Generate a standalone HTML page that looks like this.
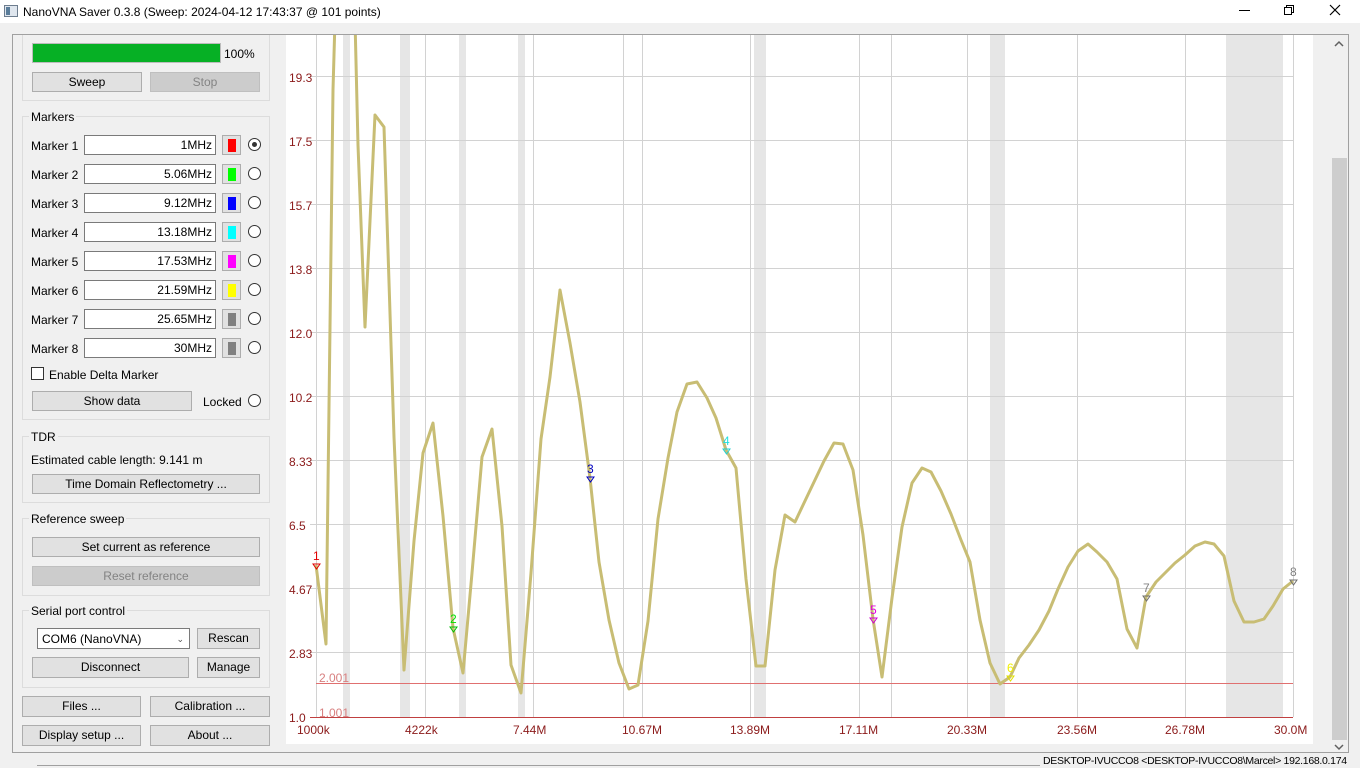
<!DOCTYPE html>
<html><head><meta charset="utf-8"><style>
*{box-sizing:border-box;margin:0;padding:0}
body{width:1360px;height:768px;overflow:hidden;background:#f0f0f0;font-family:"Liberation Sans",sans-serif;font-size:12px;color:#000;position:relative}
.a{position:absolute;white-space:nowrap}
.btn{position:absolute;background:#e1e1e1;border:1px solid #adadad;text-align:center;font-size:12px;line-height:19px}
.dis{background:#cccccc;border-color:#bfbfbf;color:#838383}
.gb{position:absolute;border:1px solid #dcdcdc;left:22px;width:248px}
.gt{position:absolute;background:#f0f0f0;padding:0 2px;left:6px;top:-8px}
.inp{position:absolute;left:84px;width:132px;height:20px;background:#fff;border:1px solid #7a7a7a;text-align:right;padding-right:3px;line-height:19px}
.sw{position:absolute;left:222px;width:19px;height:20px;background:#e1e1e1;border:1px solid #adadad}
.sw i{position:absolute;left:5px;top:3px;width:8px;height:13px}
.rd{position:absolute;left:248px;width:13px;height:13px;border:1px solid #333;border-radius:50%;background:#fff}
.lbl{position:absolute;left:31px}
</style></head><body>
<div class="a" style="left:0;top:0;width:1360px;height:23px;background:#fff"></div>
<svg class="a" style="left:4px;top:5px" width="14" height="13"><rect x="0.5" y="0.5" width="13" height="11" fill="#dfe6ee" stroke="#6d7d8e"/><rect x="2" y="2" width="4" height="8" fill="#5a7d9a"/></svg>
<div class="a" style="left:23px;top:5px;font-size:12px">NanoVNA Saver 0.3.8 (Sweep: 2024-04-12 17:43:37 @ 101 points)</div>
<div class="a" style="left:1239px;top:10px;width:11px;height:1px;background:#000"></div>
<svg class="a" style="left:1283px;top:4px" width="12" height="12"><rect x="1.5" y="3.5" width="7" height="7" fill="none" stroke="#000"/><path d="M3.5 3.5V1.5H10.5V8.5H8.5" fill="none" stroke="#000"/></svg>
<svg class="a" style="left:1329px;top:4px" width="12" height="12"><path d="M1 1L11 11M11 1L1 11" stroke="#000" stroke-width="1.2"/></svg>

<div class="a" style="left:12px;top:34px;width:1337px;height:719px;border:1px solid #a0a0a0"></div>

<div class="gb" style="top:35px;height:66px;border-top:none"></div>
<div class="a" style="left:32px;top:43px;width:189px;height:20px;background:#06b025;border:1px solid #bcbcbc"></div>
<div class="a" style="left:224px;top:47px">100%</div>
<div class="btn" style="left:32px;top:72px;width:110px;height:20px">Sweep</div>
<div class="btn dis" style="left:150px;top:72px;width:110px;height:20px">Stop</div>

<div class="gb" style="top:116px;height:304px"><span class="gt" style="top:-7px">Markers</span></div>
<div class="lbl" style="top:139px">Marker 1</div><div class="inp" style="top:135px">1MHz</div><div class="sw" style="top:135px"><i style="background:#f00"></i></div><div class="rd" style="top:138px"><div style="position:absolute;left:3px;top:3px;width:5px;height:5px;border-radius:50%;background:#333"></div></div>
<div class="lbl" style="top:168px">Marker 2</div><div class="inp" style="top:164px">5.06MHz</div><div class="sw" style="top:164px"><i style="background:#0f0"></i></div><div class="rd" style="top:167px"></div>
<div class="lbl" style="top:197px">Marker 3</div><div class="inp" style="top:193px">9.12MHz</div><div class="sw" style="top:193px"><i style="background:#00f"></i></div><div class="rd" style="top:196px"></div>
<div class="lbl" style="top:226px">Marker 4</div><div class="inp" style="top:222px">13.18MHz</div><div class="sw" style="top:222px"><i style="background:#0ff"></i></div><div class="rd" style="top:225px"></div>
<div class="lbl" style="top:255px">Marker 5</div><div class="inp" style="top:251px">17.53MHz</div><div class="sw" style="top:251px"><i style="background:#f0f"></i></div><div class="rd" style="top:254px"></div>
<div class="lbl" style="top:284px">Marker 6</div><div class="inp" style="top:280px">21.59MHz</div><div class="sw" style="top:280px"><i style="background:#ff0"></i></div><div class="rd" style="top:283px"></div>
<div class="lbl" style="top:313px">Marker 7</div><div class="inp" style="top:309px">25.65MHz</div><div class="sw" style="top:309px"><i style="background:#808080"></i></div><div class="rd" style="top:312px"></div>
<div class="lbl" style="top:342px">Marker 8</div><div class="inp" style="top:338px">30MHz</div><div class="sw" style="top:338px"><i style="background:#808080"></i></div><div class="rd" style="top:341px"></div>
<div class="a" style="left:31px;top:367px;width:13px;height:13px;border:1px solid #333;background:#fff"></div>
<div class="a" style="left:49px;top:368px">Enable Delta Marker</div>
<div class="btn" style="left:32px;top:391px;width:160px;height:20px">Show data</div>
<div class="a" style="left:203px;top:395px">Locked</div><div class="rd" style="top:394px"></div>

<div class="gb" style="top:436px;height:67px"><span class="gt" style="top:-7px">TDR</span></div>
<div class="a" style="left:31px;top:453px">Estimated cable length: 9.141 m</div>
<div class="btn" style="left:32px;top:474px;width:228px;height:20px">Time Domain Reflectometry ...</div>

<div class="gb" style="top:518px;height:78px"><span class="gt" style="top:-7px">Reference sweep</span></div>
<div class="btn" style="left:32px;top:537px;width:228px;height:20px">Set current as reference</div>
<div class="btn dis" style="left:32px;top:566px;width:228px;height:20px">Reset reference</div>

<div class="gb" style="top:610px;height:78px"><span class="gt" style="top:-7px">Serial port control</span></div>
<div class="a" style="left:37px;top:628px;width:153px;height:21px;background:#fff;border:1px solid #7a7a7a;padding-left:4px;line-height:20px">COM6 (NanoVNA)<span style="position:absolute;right:5px;top:0;font-size:9px;color:#555">&#8964;</span></div>
<div class="btn" style="left:197px;top:628px;width:63px;height:21px">Rescan</div>
<div class="btn" style="left:32px;top:657px;width:157px;height:21px">Disconnect</div>
<div class="btn" style="left:197px;top:657px;width:63px;height:21px">Manage</div>

<div class="btn" style="left:22px;top:696px;width:119px;height:21px">Files ...</div>
<div class="btn" style="left:150px;top:696px;width:120px;height:21px">Calibration ...</div>
<div class="btn" style="left:22px;top:725px;width:119px;height:21px">Display setup ...</div>
<div class="btn" style="left:150px;top:725px;width:120px;height:21px">About ...</div>

<div class="a" style="left:1331px;top:35px;width:17px;height:717px;background:#f0f0f0"></div>
<div class="a" style="left:1332px;top:158px;width:15px;height:582px;background:#cdcdcd"></div>
<svg class="a" style="left:1334px;top:40px" width="10" height="8"><path d="M1 6L5 2L9 6" fill="none" stroke="#606060" stroke-width="1.5"/></svg>
<svg class="a" style="left:1334px;top:743px" width="10" height="8"><path d="M1 2L5 6L9 2" fill="none" stroke="#606060" stroke-width="1.5"/></svg>

<svg class="a" style="left:286px;top:35px" width="1027" height="709" viewBox="286 35 1027 709">
<rect x="286" y="35" width="1027" height="709" fill="#fff"/>
<g fill="#e6e6e6">
<rect x="343" y="35" width="7" height="682"/><rect x="400" y="35" width="10" height="682"/><rect x="459" y="35" width="7" height="682"/><rect x="518" y="35" width="7" height="682"/><rect x="754" y="35" width="12" height="682"/><rect x="990" y="35" width="15" height="682"/><rect x="1226" y="35" width="57" height="682"/>
</g>
<g stroke="#d2d2d2" stroke-width="1">
<path d="M316.5 35V717M425.5 35V717M533.5 35V717M623.5 35V717M642.5 35V717M750.5 35V717M859.5 35V717M891.5 35V717M967.5 35V717M1077.5 35V717M1185.5 35V717M1293.5 35V717"/>
<path d="M310 76.5H1293M310 140.5H1293M310 204.5H1293M310 268.5H1293M310 332.5H1293M310 396.5H1293M310 460.5H1293M310 524.5H1293M310 588.5H1293M310 652.5H1293"/>
</g>
<path d="M316 683.5H1293" stroke="#e07070"/>
<path d="M310 717.5H1293" stroke="#c04040"/>
<g fill="#8b1a1a" font-size="12" font-family="Liberation Sans,sans-serif">
<text x="289" y="82">19.3</text><text x="289" y="146">17.5</text><text x="289" y="210">15.7</text><text x="289" y="274">13.8</text><text x="289" y="338">12.0</text><text x="289" y="402">10.2</text><text x="289" y="466">8.33</text><text x="289" y="530">6.5</text><text x="289" y="594">4.67</text><text x="289" y="658">2.83</text><text x="289" y="722">1.0</text>
<text x="297" y="734">1000k</text><text x="405" y="734">4222k</text><text x="513" y="734">7.44M</text><text x="622" y="734">10.67M</text><text x="730" y="734">13.89M</text><text x="839" y="734">17.11M</text><text x="947" y="734">20.33M</text><text x="1057" y="734">23.56M</text><text x="1165" y="734">26.78M</text><text x="1274" y="734">30.0M</text>
</g>
<g fill="#d88080" font-size="12" font-family="Liberation Sans,sans-serif"><text x="319" y="682">2.001</text><text x="319" y="717">1.001</text></g>
<polyline fill="none" stroke="#c8bd74" stroke-width="3" stroke-linejoin="round" points="316,565 326,644 333,90 335,20 345,20 355,20 358,145 365,327 375,115 384,127 394,437 404,670 414,541 423,453 433,423 443,516 453,628 463,673 472,573 482,457 492,429 502,526 511,665 521,693 531,573 541,439 550,377 560,290 570,343 580,402 590,478 599,562 609,620 619,663 629,689 638,685 648,621 658,519 668,458 677,412 687,384 697,382 707,398 716,418 726,450 736,468 746,579 756,666 765,666 775,570 785,515 795,522 804,503 814,482 824,461 834,443 843,444 853,470 863,535 873,619 882,677 892,598 902,527 912,483 922,468 931,472 941,491 951,514 961,540 970,562 980,620 990,663 1000,684 1010,677 1019,658 1029,645 1039,630 1049,611 1058,589 1068,567 1078,551 1088,544 1097,552 1107,562 1117,579 1127,629 1137,648 1146,597 1156,582 1166,572 1175,563 1185,555 1195,546 1205,542 1214,544 1224,556 1234,601 1244,622 1254,622 1264,619 1273,606 1283,589 1293,581"/>
<g font-size="12" font-family="Liberation Sans,sans-serif">
<text x="313" y="560" fill="#e00000">1</text><path d="M313 564h7l-3.5 5z" fill="none" stroke="#e00000"/>
<text x="450" y="623" fill="#00e000">2</text><path d="M450 627h7l-3.5 5z" fill="none" stroke="#00c000"/>
<text x="587" y="473" fill="#0000c0">3</text><path d="M587 477h7l-3.5 5z" fill="none" stroke="#0000c0"/>
<text x="723" y="445" fill="#20e0e0">4</text><path d="M723 449h7l-3.5 5z" fill="none" stroke="#20d0d0"/>
<text x="870" y="614" fill="#e000e0">5</text><path d="M870 618h7l-3.5 5z" fill="none" stroke="#d000d0"/>
<text x="1007" y="672" fill="#f0f000">6</text><path d="M1007 676h7l-3.5 5z" fill="none" stroke="#e0e000"/>
<text x="1143" y="592" fill="#808080">7</text><path d="M1143 596h7l-3.5 5z" fill="none" stroke="#707070"/>
<text x="1290" y="576" fill="#808080">8</text><path d="M1290 580h7l-3.5 5z" fill="none" stroke="#707070"/>
</g>
</svg>

<div class="a" style="left:37px;top:765px;width:1003px;height:1px;background:#a0a0a0"></div>
<div class="a" style="left:1043px;top:755px;font-size:10.5px;letter-spacing:-0.3px">DESKTOP-IVUCCO8 &lt;DESKTOP-IVUCCO8\Marcel&gt; 192.168.0.174</div>
</body></html>
